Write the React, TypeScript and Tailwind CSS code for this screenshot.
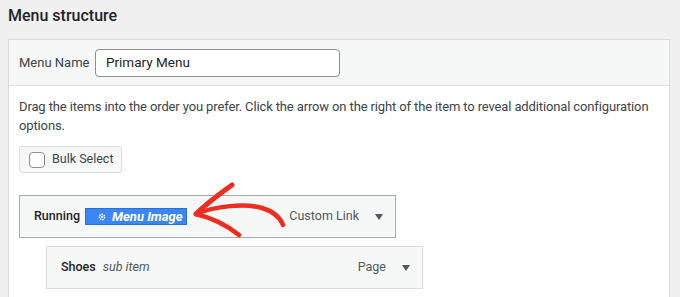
import React from "react";

const font = { fontFamily: "Roboto, 'Liberation Sans', sans-serif" };

const Caret = () => (
  <svg width="8" height="6" viewBox="0 0 8 6" className="text-[#50575e]">
    <path d="M0 0h8L4 6z" fill="currentColor" />
  </svg>
);

const App = () => {
  return (
    <div className="relative w-[680px] h-[297px] overflow-hidden bg-[#f0f0f1] text-[#1d2327]" style={font}>
      <h2 className="pl-2 pt-[5px] h-[39px] text-[16px] font-medium leading-[22px]">Menu structure</h2>
      <div className="ml-2 w-[662px] border border-[#dcdcde] bg-white">
        <div className="flex items-center h-[46px] px-[10px] bg-[#f6f7f7] border-b border-[#e0e0e0]">
          <span className="w-[76px] text-[13px] text-[#3c434a]">Menu Name</span>
          <div className="flex items-center w-[245px] h-[28px] px-[10px] bg-white border border-[#8c8f94] rounded-[4px] text-[13.5px]">
            Primary Menu
          </div>
        </div>
        <div className="px-[10px] pt-[11px] pb-6">
          <p className="text-[13px] leading-[19px] tracking-[-0.13px] text-[#3c434a]">
            Drag the items into the order you prefer. Click the arrow on the right of the item to reveal additional configuration options.
          </p>
          <div className="mt-[11px] flex items-center gap-[7px] w-[103px] h-[27px] px-[9px] bg-[#f6f7f7] border border-[#dcdcde] rounded-[3px] text-[12.5px] text-[#3c434a] whitespace-nowrap">
            <span className="shrink-0 w-[16px] h-[16px] bg-white border border-[#8c8f94] rounded-[4px]" />
            Bulk Select
          </div>
          <div className="mt-[22px] flex items-center w-[377px] h-[43px] pl-[14px] pr-[12px] bg-[#f6f7f7] border border-[#a7aaad] text-[12.5px]">
            <span className="font-medium">Running</span>
            <span className="ml-[5px] flex items-center gap-[6px] h-[17px] w-[102px] pl-[12px] bg-[#3a86f7] border border-[#2a6fd6] text-white italic font-bold text-[13px] whitespace-nowrap">
              <svg width="8" height="8" viewBox="0 0 8 8">
                <circle cx="4" cy="4" r="2.6" fill="none" stroke="white" strokeWidth="1.6" strokeDasharray="1.4 0.9" />
                <circle cx="4" cy="4" r="1" fill="white" />
              </svg>
              Menu Image
            </span>
            <span className="ml-auto text-[#50575e]">Custom Link</span>
            <span className="ml-[16px]"><Caret /></span>
          </div>
          <div className="mt-[8px] ml-[27px] flex items-center w-[377px] h-[43px] pl-[14px] pr-[12px] bg-[#f6f7f7] border border-[#dcdcde] text-[12.5px]">
            <span className="font-medium">Shoes</span>
            <span className="ml-[7px] italic text-[#50575e]">sub item</span>
            <span className="ml-auto text-[#50575e]">Page</span>
            <span className="ml-[16px]"><Caret /></span>
          </div>
        </div>
      </div>
      <svg className="absolute left-0 top-0 pointer-events-none" width="680" height="297">
        <g fill="none" stroke="#ec2d1f" strokeLinecap="round" strokeLinejoin="round">
          <path d="M196 214 C 215 206, 245 203, 262 208 C 272 211, 280 217, 283 225" strokeWidth="4.5" />
          <path d="M232 185 C 218 195, 205 205, 196 214" strokeWidth="5" />
          <path d="M196 214 C 212 218, 228 226, 239 235" strokeWidth="4.5" />
        </g>
      </svg>
    </div>
  );
};

export default App;
